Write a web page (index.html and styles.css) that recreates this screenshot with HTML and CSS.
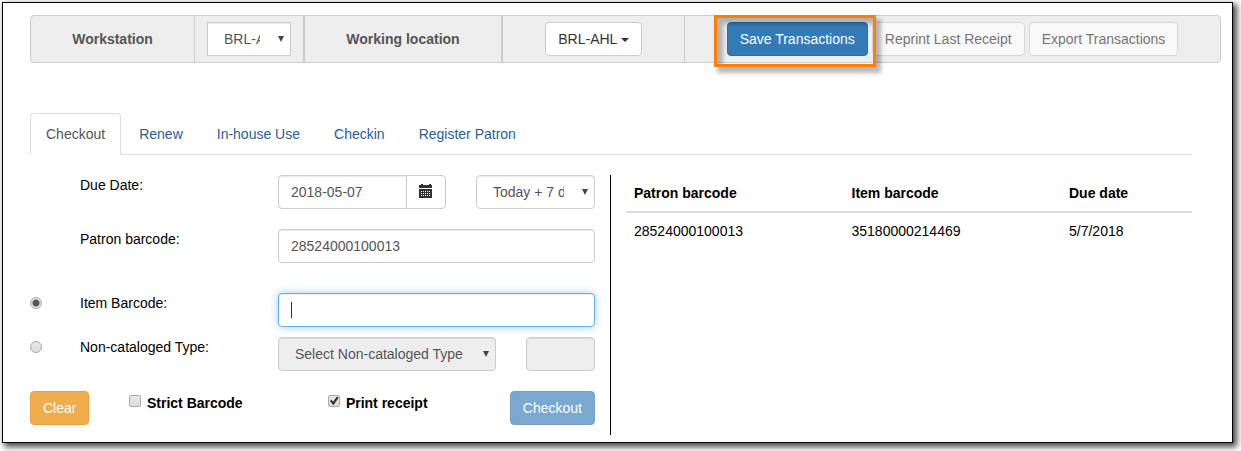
FILE: index.html
```html
<!DOCTYPE html>
<html lang="en">
<head>
<meta charset="utf-8">
<title>Offline Circulation</title>
<link rel="stylesheet" href="styles.css">
</head>
<body>
<div class="page">
<main class="frame">
  <div class="toolbar">
    <label class="cell title" for="workstation">Workstation</label>
    <div class="cell">
      <span class="select-wrap workstation"><select class="control square" id="workstation"><option>BRL-AHL-CIRC</option></select></span>
    </div>
    <div class="cell title thick">Working location</div>
    <div class="cell thick"><button class="btn" type="button">BRL-AHL <span class="caret"></span></button></div>
    <div class="cell actions">
      <span class="highlight"><button class="btn primary" type="button">Save Transactions</button></span>
      <button class="btn" type="button" disabled>Reprint Last Receipt</button>
      <button class="btn" type="button" disabled>Export Transactions</button>
    </div>
  </div>

  <div class="content">
    <nav class="tabs">
      <a class="tab active" href="#checkout">Checkout</a>
      <a class="tab" href="#renew">Renew</a>
      <a class="tab" href="#inhouse">In-house Use</a>
      <a class="tab" href="#checkin">Checkin</a>
      <a class="tab" href="#register">Register Patron</a>
    </nav>

    <div class="panels">
      <form class="form" id="checkout">
        <div class="row spaced">
          <span></span>
          <label for="due">Due Date:</label>
          <div class="due-fields">
            <div class="input-group">
              <input class="control" id="due" type="text" value="2018-05-07">
              <button class="btn addon" type="button" aria-label="Choose date">
                <svg class="calendar" viewBox="0 0 14 14" shape-rendering="crispEdges" aria-hidden="true">
                  <path fill="#333" d="M2 0h2v1h6V0h2v1h1v3H0V1h2zM0 5h13v9H0z"/>
                  <path fill="#fff" d="M2 7h1v1H2zM4 7h1v1H4zM6 7h1v1H6zM8 7h1v1H8zM10 7h1v1h-1zM2 9h1v1H2zM4 9h1v1H4zM6 9h1v1H6zM8 9h1v1H8zM10 9h1v1h-1zM2 11h1v1H2zM4 11h1v1H4zM6 11h1v1H6zM8 11h1v1H8zM10 11h1v1h-1z"/>
                </svg>
              </button>
            </div>
            <span class="select-wrap"><select class="control" aria-label="Due date offset"><option>Today + 7 days</option></select></span>
          </div>
        </div>
        <div class="row wide">
          <span></span>
          <label for="patron">Patron barcode:</label>
          <input class="control" id="patron" type="text" value="28524000100013">
        </div>
        <div class="row tight">
          <input class="radio" type="radio" name="kind" id="kind-item" aria-label="Item Barcode" checked>
          <label for="item">Item Barcode:</label>
          <div class="focused"><input class="control" id="item" type="text"></div>
        </div>
        <div class="row spaced">
          <input class="radio" type="radio" name="kind" id="kind-noncat" aria-label="Non-cataloged Type">
          <label for="noncat">Non-cataloged Type:</label>
          <div class="noncat-fields">
            <span class="select-wrap"><select class="control" id="noncat" disabled><option>Select Non-cataloged Type</option></select></span>
            <input class="control" type="text" aria-label="Count" disabled>
          </div>
        </div>
        <div class="footer">
          <div><button class="btn warning" type="button">Clear</button></div>
          <label class="check"><input class="checkbox" type="checkbox">Strict Barcode</label>
          <label class="check"><input class="checkbox" type="checkbox" checked>Print receipt</label>
          <button class="btn primary" type="submit" disabled>Checkout</button>
        </div>
      </form>

      <div class="results">
        <table class="table">
          <thead><tr><th>Patron barcode</th><th>Item barcode</th><th>Due date</th></tr></thead>
          <tbody><tr><td>28524000100013</td><td>35180000214469</td><td>5/7/2018</td></tr></tbody>
        </table>
      </div>
    </div>
  </div>
</main>
</div>
</body>
</html>
```
FILE: styles.css
```css
* { box-sizing: border-box; }

body {
  margin: 0;
  background: #fff;
  color: #000;
  font: 14px/20px "Liberation Sans", Arial, sans-serif;
}

.page { padding: 2px 8px 8px 2px; }

.frame {
  padding: 12px 11px 7px 27px;
  border: 1px solid #000;
  background: #fff;
  box-shadow: 3px 3px 6px 1px rgba(0, 0, 0, 0.7);
}

/* Toolbar */
.toolbar {
  display: grid;
  grid-template-columns: 163fr 109fr 198fr 183fr 536fr;
  border: 1px solid #ccc;
  border-radius: 4px;
  background: #eee;
  color: #555;
}

.cell {
  display: flex;
  align-items: center;
  justify-content: center;
  min-width: 0;
  padding: 6px 0;
  border-left: 1px solid #ccc;
}
.cell:first-child { border-left: 0; }
.cell.thick { border-left-width: 2px; }
.title { font-weight: bold; }
.actions { gap: 4px; }

.btn {
  height: 34px;
  padding: 0 12px;
  border: 1px solid #ccc;
  border-radius: 4px;
  background: #fff;
  color: #333;
  font: inherit;
  white-space: nowrap;
}
.btn:disabled { opacity: 0.65; }
.btn.primary { border-color: #2e6da4; background: #337ab7; color: #fff; }
.btn.warning { border-color: #eea236; background: #f0ad4e; color: #fff; }

.caret {
  display: inline-block;
  border: 4px solid transparent;
  border-top-color: currentColor;
  border-bottom: 0;
  vertical-align: middle;
}

.highlight { position: relative; z-index: 1; }
.highlight::after {
  content: "";
  position: absolute;
  inset: -7px -8px -11px -13px;
  border: 3px solid #ff8000;
  box-shadow: 4px 5px 4px 1px rgba(0, 0, 0, 0.28), inset 6px 6px 4px rgba(0, 0, 0, 0.25);
  pointer-events: none;
}

/* Controls */
.control {
  display: block;
  width: 100%;
  min-width: 0;
  height: 34px;
  margin: 0;
  padding: 0 12px;
  border: 1px solid #ccc;
  border-radius: 4px;
  background: #fff;
  box-shadow: inset 0 1px 1px rgba(0, 0, 0, 0.08);
  color: #555;
  font: inherit;
}
.control:disabled { background: #eee; opacity: 1; }
.control.square { border-radius: 0; }

select.control {
  appearance: none;
  padding: 0 30px 0 16px;
}
.select-wrap { position: relative; display: block; }
.select-wrap::after {
  content: "";
  position: absolute;
  top: 14px;
  right: 7px;
  border: 3px solid transparent;
  border-top: 6px solid #444;
  border-bottom: 0;
  pointer-events: none;
}
.workstation { width: 84px; }

/* Tabs */
.content { margin: 50px 29px 0 0; }

.tabs {
  display: flex;
  gap: 2px;
  border-bottom: 1px solid #ddd;
}
.tab {
  margin-bottom: -1px;
  padding: 10px 15px;
  border: 1px solid transparent;
  border-radius: 4px 4px 0 0;
  color: #2a6096;
  text-decoration: none;
}
.tab.active {
  border-color: #ddd #ddd #fff;
  background: #fff;
  color: #555;
}

/* Checkout form */
.panels {
  display: grid;
  grid-template-columns: 1fr 1fr;
  margin-top: 20px;
}
.form {
  padding: 0 15px 10px 0;
  border-right: 1px solid #000;
}
.row {
  display: grid;
  grid-template-columns: 50fr 198fr 317fr;
  align-items: start;
}
.row.tight { margin-bottom: 10px; }
.row.spaced { margin-bottom: 20px; }
.row.wide { margin-bottom: 30px; }

.due-fields,
.noncat-fields { display: grid; column-gap: 30px; }
.due-fields { grid-template-columns: 168fr 119fr; }
.noncat-fields { grid-template-columns: 218fr 69fr; }

.input-group { display: flex; }
.input-group .control { flex: 1; border-radius: 4px 0 0 4px; }
.addon {
  flex: none;
  width: 40px;
  margin-left: -1px;
  padding: 0 12px 2px;
  border-radius: 0 4px 4px 0;
}
.calendar { display: block; width: 14px; height: 14px; }

.focused { position: relative; }
.focused .control {
  border-color: #66afe9;
  box-shadow: inset 0 1px 1px rgba(0, 0, 0, 0.08), 0 0 8px rgba(102, 175, 233, 0.6);
}
.focused::after {
  content: "";
  position: absolute;
  top: 9px;
  left: 13px;
  width: 1px;
  height: 16px;
  background: #333;
}

.radio,
.checkbox {
  appearance: none;
  flex: none;
  border: 1px solid #aaa;
  background: linear-gradient(#e8e8e8, #ddd);
}
.radio {
  width: 12px;
  height: 12px;
  margin: 4px 0 0;
  border-radius: 50%;
}
.radio:checked { background: radial-gradient(circle, #555 0 3px, #e4e4e4 4px); }
.checkbox {
  width: 12px;
  height: 12px;
  margin: 2px 6px 0 0;
  border-radius: 2px;
}
.checkbox:checked::after {
  content: "";
  display: block;
  width: 10px;
  height: 10px;
  background: #333;
  clip-path: polygon(10% 50%, 25% 38%, 42% 58%, 80% 5%, 98% 18%, 45% 92%);
}

.footer {
  display: grid;
  grid-template-columns: 99fr 199fr 182fr auto;
  align-items: start;
}
.check {
  display: flex;
  align-items: flex-start;
  padding-top: 2px;
  font-weight: bold;
}

/* Transactions table */
.results { padding-left: 15px; }
.table {
  width: 100%;
  border-collapse: collapse;
  table-layout: fixed;
}
.table th,
.table td {
  padding: 8px;
  text-align: left;
}
.table th { border-bottom: 2px solid #ddd; }
.table th:last-child { width: 131px; }
```
